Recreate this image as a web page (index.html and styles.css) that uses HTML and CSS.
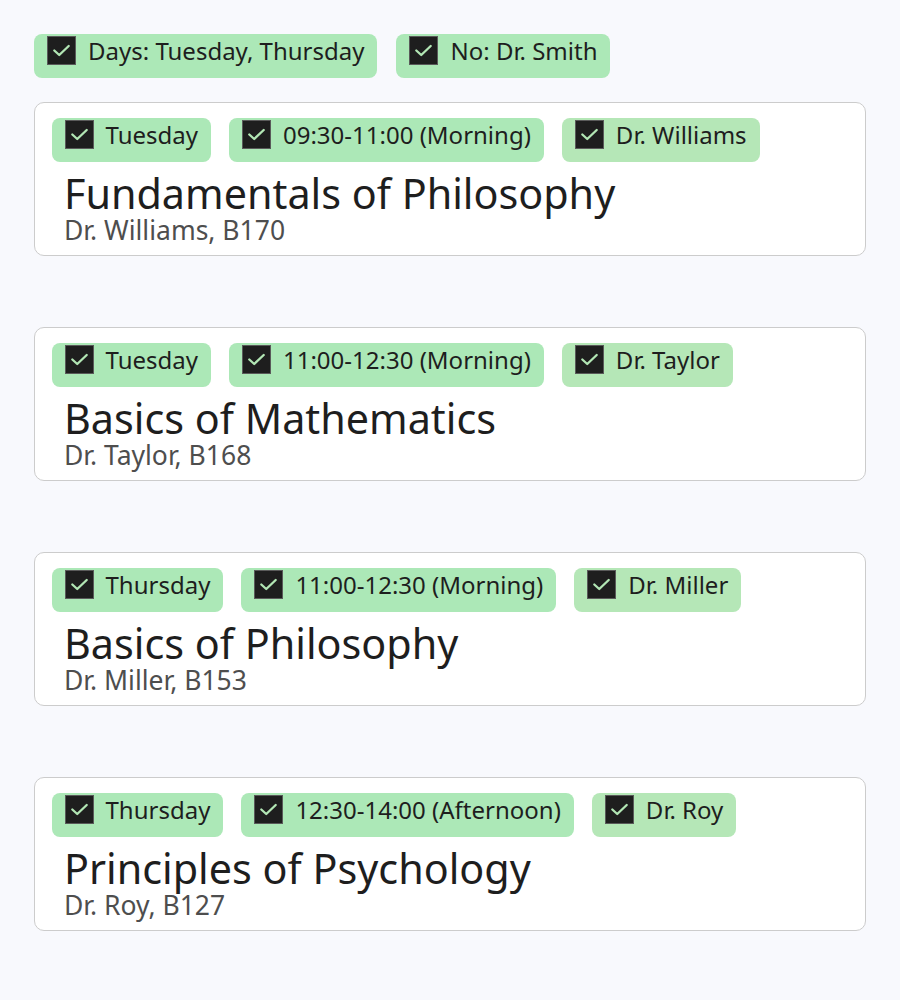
FILE: index.html
```html
<!DOCTYPE html>
<html lang="en">
<head>
<meta charset="utf-8">
<title>Schedule</title>
<link rel="stylesheet" href="styles.css">
</head>
<body>
<main class="page">
  <div class="filters">
    <span class="chip chip-day"><span class="box"><svg viewBox="0 0 30 30"><polyline points="7,15 12.5,20 23,10"/></svg></span><span class="label">Days: Tuesday, Thursday</span></span>
    <span class="chip chip-day"><span class="box"><svg viewBox="0 0 30 30"><polyline points="7,15 12.5,20 23,10"/></svg></span><span class="label">No: Dr. Smith</span></span>
  </div>

  <section class="card">
    <div class="chips">
      <span class="chip chip-day"><span class="box"><svg viewBox="0 0 30 30"><polyline points="7,15 12.5,20 23,10"/></svg></span><span class="label">Tuesday</span></span>
      <span class="chip chip-day"><span class="box"><svg viewBox="0 0 30 30"><polyline points="7,15 12.5,20 23,10"/></svg></span><span class="label">09:30-11:00 (Morning)</span></span>
      <span class="chip chip-prof"><span class="box"><svg viewBox="0 0 30 30"><polyline points="7,15 12.5,20 23,10"/></svg></span><span class="label">Dr. Williams</span></span>
    </div>
    <h2 class="title">Fundamentals of Philosophy</h2>
    <p class="sub">Dr. Williams, B170</p>
  </section>

  <section class="card">
    <div class="chips">
      <span class="chip chip-day"><span class="box"><svg viewBox="0 0 30 30"><polyline points="7,15 12.5,20 23,10"/></svg></span><span class="label">Tuesday</span></span>
      <span class="chip chip-day"><span class="box"><svg viewBox="0 0 30 30"><polyline points="7,15 12.5,20 23,10"/></svg></span><span class="label">11:00-12:30 (Morning)</span></span>
      <span class="chip chip-prof"><span class="box"><svg viewBox="0 0 30 30"><polyline points="7,15 12.5,20 23,10"/></svg></span><span class="label">Dr. Taylor</span></span>
    </div>
    <h2 class="title">Basics of Mathematics</h2>
    <p class="sub">Dr. Taylor, B168</p>
  </section>

  <section class="card">
    <div class="chips">
      <span class="chip chip-day"><span class="box"><svg viewBox="0 0 30 30"><polyline points="7,15 12.5,20 23,10"/></svg></span><span class="label">Thursday</span></span>
      <span class="chip chip-day"><span class="box"><svg viewBox="0 0 30 30"><polyline points="7,15 12.5,20 23,10"/></svg></span><span class="label">11:00-12:30 (Morning)</span></span>
      <span class="chip chip-prof"><span class="box"><svg viewBox="0 0 30 30"><polyline points="7,15 12.5,20 23,10"/></svg></span><span class="label">Dr. Miller</span></span>
    </div>
    <h2 class="title">Basics of Philosophy</h2>
    <p class="sub">Dr. Miller, B153</p>
  </section>

  <section class="card">
    <div class="chips">
      <span class="chip chip-day"><span class="box"><svg viewBox="0 0 30 30"><polyline points="7,15 12.5,20 23,10"/></svg></span><span class="label">Thursday</span></span>
      <span class="chip chip-day"><span class="box"><svg viewBox="0 0 30 30"><polyline points="7,15 12.5,20 23,10"/></svg></span><span class="label">12:30-14:00 (Afternoon)</span></span>
      <span class="chip chip-prof"><span class="box"><svg viewBox="0 0 30 30"><polyline points="7,15 12.5,20 23,10"/></svg></span><span class="label">Dr. Roy</span></span>
    </div>
    <h2 class="title">Principles of Psychology</h2>
    <p class="sub">Dr. Roy, B127</p>
  </section>
</main>
</body>
</html>
```

FILE: styles.css
```css
* { box-sizing: border-box; }

html, body {
  margin: 0;
  padding: 0;
  background: #f8f9fd;
}

body {
  font-family: "Noto Sans", "Open Sans", sans-serif;
  color: #1e1e1e;
}

.page {
  padding: 34px 34px 0 34px;
  display: flex;
  flex-direction: column;
  gap: 71px;
}

.filters {
  display: flex;
  gap: 19px;
  margin-bottom: -47px;
}

.chips {
  display: flex;
  gap: 18px;
}

.chip {
  display: inline-flex;
  align-items: flex-start;
  gap: 12px;
  height: 44px;
  padding: 2px 13px 0 13px;
  border-radius: 8px;
  font-size: 24px;
  line-height: 30px;
  white-space: nowrap;
}

.chip-day { background: #ace8b7; }
.chip-prof { background: #b5e7b7; }

.box {
  flex: none;
  width: 29px;
  height: 29px;
  background: #1e1e1e;
  border: 1px solid #5a5a5a;
  display: flex;
}

.box svg {
  width: 100%;
  height: 100%;
  fill: none;
  stroke: #b2e6b4;
  stroke-width: 2.6;
  stroke-linecap: round;
  stroke-linejoin: round;
}

.label {
  display: block;
}

.card {
  background: #ffffff;
  border: 1.5px solid #cccccc;
  border-radius: 10px;
  padding: 15px 16px 9px 16.5px;
  height: 154px;
}

.title {
  margin: 9px 0 0 12.5px;
  font-size: 41.3px;
  font-weight: 400;
  line-height: 44px;
  color: #1e1e1e;
}

.sub {
  margin: 0 0 0 12.5px;
  font-size: 26.5px;
  line-height: 30px;
  color: #4e4e4e;
}
```
